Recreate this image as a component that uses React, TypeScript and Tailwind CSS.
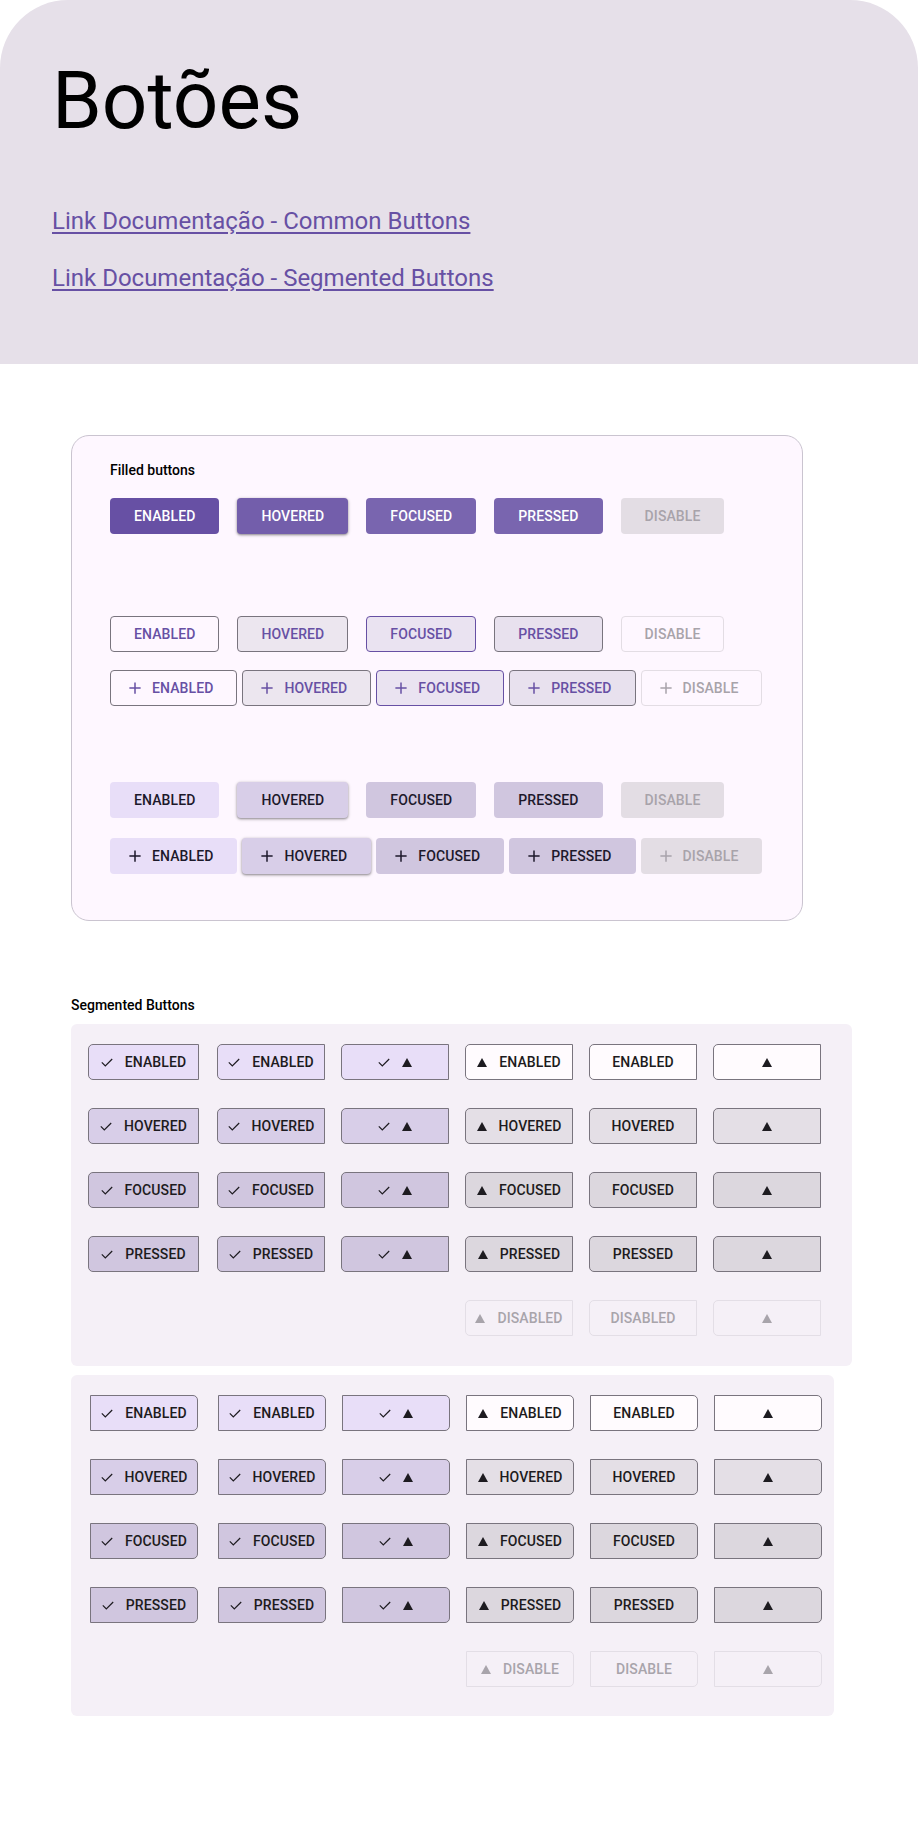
import React from 'react';

type State = 'enabled' | 'hovered' | 'focused' | 'pressed' | 'disable';

const labels: Record<State, string> = {
  enabled: 'ENABLED',
  hovered: 'HOVERED',
  focused: 'FOCUSED',
  pressed: 'PRESSED',
  disable: 'DISABLE',
};

const states: State[] = ['enabled', 'hovered', 'focused', 'pressed', 'disable'];

// Common button colours per variant
const filledCls: Record<State, string> = {
  enabled: 'bg-[#6750A4] text-white',
  hovered:
    'bg-[#735EAB] text-white shadow-[0_1px_2px_rgba(0,0,0,0.3),0_1px_3px_1px_rgba(0,0,0,0.15)]',
  focused: 'bg-[#7965AF] text-white',
  pressed: 'bg-[#7965AF] text-white',
  disable: 'bg-[#E3DDE4] text-[#A8A3AA]',
};

const outlinedCls: Record<State, string> = {
  enabled: 'border border-[#79747E] text-[#6750A4]',
  hovered: 'border border-[#79747E] bg-[#ECE6EF] text-[#6750A4]',
  focused: 'border border-[#6750A4] bg-[#EAE3F1] text-[#6750A4]',
  pressed: 'border border-[#79747E] bg-[#E8E1EE] text-[#6750A4]',
  disable: 'border border-[#E3DDE4] text-[#A8A3AA]',
};

const tonalCls: Record<State, string> = {
  enabled: 'bg-[#E8DEF8] text-[#1D192B]',
  hovered:
    'bg-[#D8CEE8] text-[#1D192B] shadow-[0_1px_2px_rgba(0,0,0,0.3),0_1px_3px_1px_rgba(0,0,0,0.15)]',
  focused: 'bg-[#D0C6DF] text-[#1D192B]',
  pressed: 'bg-[#D0C6DF] text-[#1D192B]',
  disable: 'bg-[#E3DDE4] text-[#A8A3AA]',
};

function PlusIcon() {
  return (
    <svg viewBox="0 0 24 24" className="w-[18px] h-[18px] shrink-0" fill="none" stroke="currentColor" strokeWidth={2}>
      <path d="M4.5 12h15M12 4.5v15" />
    </svg>
  );
}

function CheckIcon() {
  return (
    <svg width="12" height="9" viewBox="0 0 12 9" className="shrink-0" fill="none" stroke="currentColor" strokeWidth={1.2}>
      <path d="M0.8 4.4 L4.3 7.9 L11.2 1" />
    </svg>
  );
}

function TriangleIcon() {
  return (
    <svg width="10" height="9" viewBox="0 0 10 9" className="shrink-0" fill="currentColor">
      <polygon points="5,0 10,9 0,9" />
    </svg>
  );
}

function CommonButton({
  state,
  variant,
  icon,
  outlined,
}: {
  state: State;
  variant: Record<State, string>;
  icon?: boolean;
  outlined?: boolean;
}) {
  // outlined buttons lose 1px of padding to the border so widths line up
  let pad = 'px-6';
  if (icon) pad = outlined ? 'pl-[15px] pr-[23px] gap-2' : 'pl-4 pr-6 gap-2';
  else if (outlined) pad = 'px-[23px]';

  return (
    <div
      className={`h-[36px] rounded-[4px] flex items-center text-[14px] font-medium tracking-[0.1px] ${pad} ${variant[state]}`}
    >
      {icon && <PlusIcon />}
      <span>{labels[state]}</span>
    </div>
  );
}

type SegState = 'enabled' | 'hovered' | 'focused' | 'pressed';

const segSelected: Record<SegState, string> = {
  enabled: 'bg-[#E8DEF8]',
  hovered: 'bg-[#D8CEE8]',
  focused: 'bg-[#D0C6DF]',
  pressed: 'bg-[#D0C6DF]',
};

const segUnselected: Record<SegState, string> = {
  enabled: 'bg-[#FFFBFE]',
  hovered: 'bg-[#E4DFE6]',
  focused: 'bg-[#DCD7DE]',
  pressed: 'bg-[#DCD7DE]',
};

function Segment({
  bg,
  rounded,
  width,
  disabled,
  children,
}: {
  bg?: string;
  rounded: string;
  width: string;
  disabled?: boolean;
  children: React.ReactNode;
}) {
  return (
    <div
      className={`h-[36px] ${width} ${rounded} flex items-center justify-center gap-3 text-[14px] font-medium tracking-[0.1px] ${
        disabled ? 'border border-[#E3DEE6] text-[#A8A4AB]' : `border border-[#79747E] text-[#1D1B20] ${bg}`
      }`}
    >
      {children}
    </div>
  );
}

function SegmentedPanel({
  side,
  disabledLabel,
}: {
  side: 'left' | 'right';
  disabledLabel: string;
}) {
  const rounded = side === 'left' ? 'rounded-l-[5px]' : 'rounded-r-[5px]';
  const panelCls =
    side === 'left'
      ? 'w-[781px] pl-[17px] pt-[20px] pb-[30px] grid-cols-[129px_124px_124px_124px_124px_108px]'
      : 'w-[763px] pl-[19px] pt-[20px] pb-[29px] grid-cols-[128px_124px_124px_124px_124px_108px]';
  const firstWidth = side === 'left' ? 'w-[111px]' : 'w-[108px]';
  const rows: SegState[] = ['enabled', 'hovered', 'focused', 'pressed'];

  return (
    <div className={`ml-[71px] bg-[#F5F0F7] rounded-[6px] grid gap-y-[28px] ${panelCls}`}>
      {rows.map((s) => (
        <React.Fragment key={s}>
          <Segment bg={segSelected[s]} rounded={rounded} width={firstWidth}>
            <CheckIcon />
            <span>{labels[s]}</span>
          </Segment>
          <Segment bg={segSelected[s]} rounded={rounded} width="w-[108px]">
            <CheckIcon />
            <span>{labels[s]}</span>
          </Segment>
          <Segment bg={segSelected[s]} rounded={rounded} width="w-[108px]">
            <CheckIcon />
            <TriangleIcon />
          </Segment>
          <Segment bg={segUnselected[s]} rounded={rounded} width="w-[108px]">
            <TriangleIcon />
            <span>{labels[s]}</span>
          </Segment>
          <Segment bg={segUnselected[s]} rounded={rounded} width="w-[108px]">
            <span>{labels[s]}</span>
          </Segment>
          <Segment bg={segUnselected[s]} rounded={rounded} width="w-[108px]">
            <TriangleIcon />
          </Segment>
        </React.Fragment>
      ))}
      <div />
      <div />
      <div />
      <Segment rounded={rounded} width="w-[108px]" disabled>
        <TriangleIcon />
        <span>{disabledLabel}</span>
      </Segment>
      <Segment rounded={rounded} width="w-[108px]" disabled>
        <span>{disabledLabel}</span>
      </Segment>
      <Segment rounded={rounded} width="w-[108px]" disabled>
        <TriangleIcon />
      </Segment>
    </div>
  );
}

export default function App() {
  return (
    <div className="min-h-[1822px] w-[918px] bg-white font-[Roboto,sans-serif] text-[#1D1B20]">
      {/* Header */}
      <header className="h-[364px] bg-[#E6E0E9] rounded-t-[68px] px-[52px] pt-[61px]">
        <h1 className="text-[80px] leading-[80px] font-normal text-black">Botões</h1>
        <div className="mt-[64px] flex flex-col gap-[25px] items-start">
          <a className="text-[24px] leading-[32px] text-[#6750A4] underline underline-offset-[3px]" href="#">
            Link Documentação - Common Buttons
          </a>
          <a className="text-[24px] leading-[32px] text-[#6750A4] underline underline-offset-[3px]" href="#">
            Link Documentação - Segmented Buttons
          </a>
        </div>
      </header>

      {/* Common buttons card */}
      <section className="ml-[71px] mt-[71px] w-[732px] border border-[#CAC4D0] rounded-[18px] bg-[#FEF7FF] pt-[24px] pl-[38px] pb-[46px]">
        <h2 className="text-[14px] leading-[20px] font-medium text-black">Filled buttons</h2>
        <div className="mt-[18px] flex gap-[18px]">
          {states.map((s) => (
            <CommonButton key={s} state={s} variant={filledCls} />
          ))}
        </div>
        <div className="mt-[82px] flex gap-[18px]">
          {states.map((s) => (
            <CommonButton key={s} state={s} variant={outlinedCls} outlined />
          ))}
        </div>
        <div className="mt-[18px] flex gap-[5px]">
          {states.map((s) => (
            <CommonButton key={s} state={s} variant={outlinedCls} icon outlined />
          ))}
        </div>
        <div className="mt-[76px] flex gap-[18px]">
          {states.map((s) => (
            <CommonButton key={s} state={s} variant={tonalCls} />
          ))}
        </div>
        <div className="mt-[20px] flex gap-[5px]">
          {states.map((s) => (
            <CommonButton key={s} state={s} variant={tonalCls} icon />
          ))}
        </div>
      </section>

      {/* Segmented buttons */}
      <h2 className="ml-[71px] mt-[74px] text-[14px] leading-[20px] font-medium text-black">Segmented Buttons</h2>
      <div className="mt-[9px]">
        <SegmentedPanel side="left" disabledLabel="DISABLED" />
      </div>
      <div className="mt-[9px]">
        <SegmentedPanel side="right" disabledLabel="DISABLE" />
      </div>
    </div>
  );
}
